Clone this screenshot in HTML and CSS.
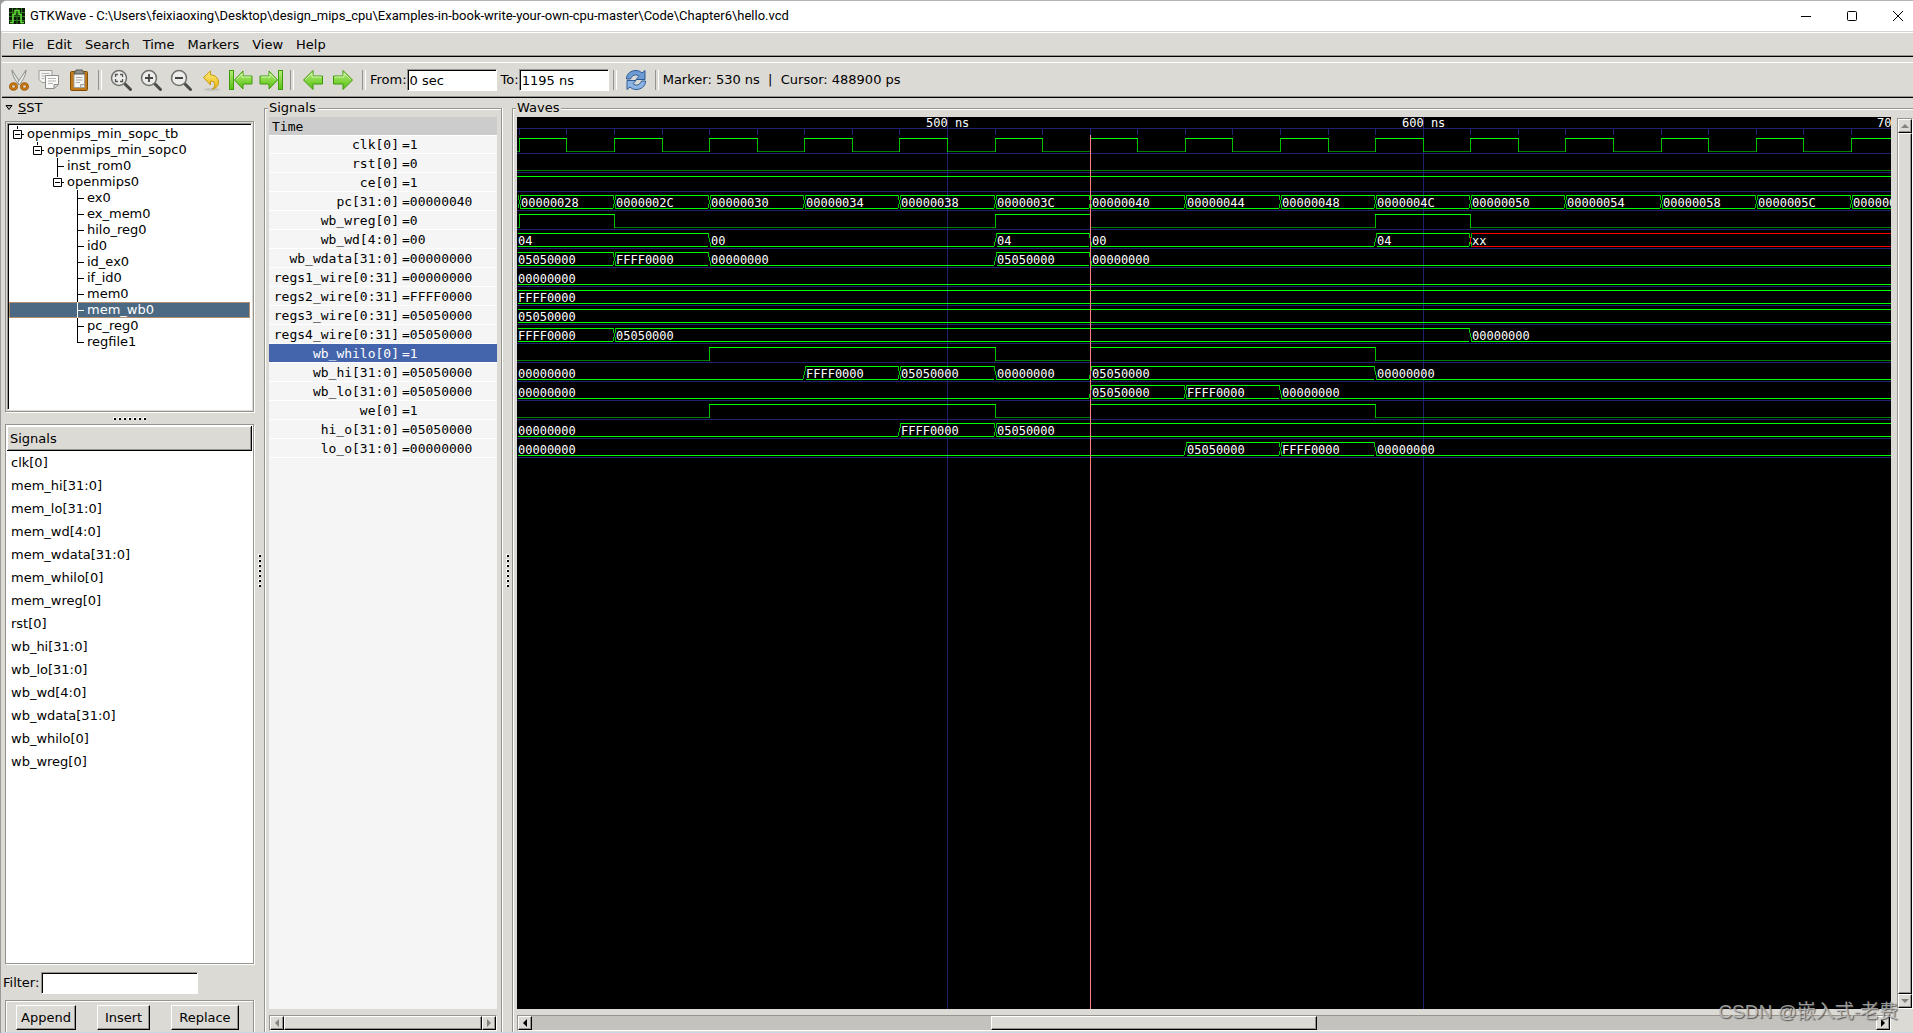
FILE: index.html
```html
<!DOCTYPE html>
<html lang="en">
<head>
<meta charset="utf-8">
<title>GTKWave - hello.vcd</title>
<link rel="stylesheet" href="styles.css">
</head>
<body>
<svg class="defs" aria-hidden="true">
  <defs>
    <linearGradient id="green" x1="0" y1="0" x2="0" y2="1"><stop offset="0" stop-color="#b4ee78"/><stop offset="1" stop-color="#58c010"/></linearGradient>
    <linearGradient id="gold" x1="0" y1="0" x2="0" y2="1"><stop offset="0" stop-color="#fdf07a"/><stop offset="1" stop-color="#e8b010"/></linearGradient>
    <symbol id="expander" viewBox="0 0 18 16"><path d="M8.500 0V3M4.500 4.500h8v8h-8zM6 8.500h5M13 8.500h2" fill="none" stroke="currentColor"/></symbol>
    <symbol id="tee" viewBox="0 0 18 16"><path d="M8.500 0V16M9 8.500h6" fill="none" stroke="currentColor"/></symbol>
    <symbol id="elbow" viewBox="0 0 18 16"><path d="M8.500 0V9M9 8.500h6" fill="none" stroke="currentColor"/></symbol>
    <symbol id="lens" viewBox="0 0 24 24"><path d="M15 15l6.500 6.500" stroke="#4a4c48" stroke-width="3" stroke-linecap="round"/><circle cx="10" cy="10" r="7.500" fill="#ececea" stroke="#70726e" stroke-width="1.500"/></symbol>
    <symbol id="arrow-left" viewBox="0 0 24 24"><path d="M2.500 12L12 2.500V8h9.500v8H12v5.500z" fill="url(#green)" stroke="#3f9a0a" stroke-linejoin="round"/><path d="M4.500 11.500L11 5v4h9.500" fill="none" stroke="#d6f8b4"/></symbol>
    <symbol id="arrow-right" viewBox="0 0 24 24"><path d="M21.500 12L12 2.500V8H2.500v8H12v5.500z" fill="url(#green)" stroke="#3f9a0a" stroke-linejoin="round"/><path d="M3.500 9H13V5l6.500 6.500" fill="none" stroke="#d6f8b4"/></symbol>
  </defs>
</svg>

<div class="window">
  <header class="titlebar">
    <svg class="app-icon" viewBox="0 0 16 16" aria-hidden="true"><rect width="16" height="16" fill="#0a1a04"/><path d="M0 4.500h16M0 8.500h16M0 12.500h16M3.500 0v16M8 0v16M12.500 0v16" stroke="#2c7a1c"/><path d="M1 14.500h3V6.500h2v-4h4v4h2v8h3" fill="none" stroke="#66e03c" stroke-width="1.500"/></svg>
    <h1 class="title">GTKWave - C:\Users\feixiaoxing\Desktop\design_mips_cpu\Examples-in-book-write-your-own-cpu-master\Code\Chapter6\hello.vcd</h1>
    <div class="window-buttons">
      <button type="button" aria-label="Minimize"><svg viewBox="0 0 12 12"><path d="M1 6.500h10"/></svg></button>
      <button type="button" aria-label="Maximize"><svg viewBox="0 0 12 12"><rect x="1.500" y="1.500" width="9" height="9" rx="1"/></svg></button>
      <button type="button" aria-label="Close"><svg viewBox="0 0 12 12"><path d="M1 1l10 10M11 1L1 11"/></svg></button>
    </div>
  </header>

  <nav class="menubar">
    <button type="button">File</button>
    <button type="button">Edit</button>
    <button type="button">Search</button>
    <button type="button">Time</button>
    <button type="button">Markers</button>
    <button type="button">View</button>
    <button type="button">Help</button>
  </nav>

  <div class="toolbar">
    <button type="button" class="tool" aria-label="Cut"><svg viewBox="0 0 24 24"><path d="M5 2l8.500 13-2 1.500C8.500 12.500 5 7 5 2z" fill="#e4e6e2" stroke="#888a85"/><path d="M19 2l-8.500 13 2 1.500C15.500 12.500 19 7 19 2z" fill="#f4f4f2" stroke="#888a85"/><g fill="none" stroke="#a85c04" stroke-width="3"><ellipse cx="6.500" cy="18.500" rx="3" ry="2.700"/><ellipse cx="17.500" cy="18.500" rx="3" ry="2.700"/></g><g fill="none" stroke="#d88818"><ellipse cx="6.500" cy="18.500" rx="3" ry="2.700"/><ellipse cx="17.500" cy="18.500" rx="3" ry="2.700"/></g></svg></button>
    <button type="button" class="tool" aria-label="Copy"><svg viewBox="0 0 24 24"><path d="M2 2.500h13v12H5l-3-3z" fill="#f4f4f2" stroke="#9a9c98"/><path d="M4.500 5.500h8M4.500 8h8M4.500 10.500h3" stroke="#b4b6b2"/><path d="M8.500 7.500h13v9l-4 4h-9z" fill="#fafaf8" stroke="#8c8e8a"/><path d="M11 10.500h8M11 13h8M11 15.500h5" stroke="#b4b6b2"/><path d="M21 16.500h-4v4" fill="#d4d4d0" stroke="#8c8e8a"/></svg></button>
    <button type="button" class="tool" aria-label="Paste"><svg viewBox="0 0 24 24"><rect x="3.500" y="3.500" width="17" height="19" rx="1" fill="#c07818" stroke="#805008"/><path d="M7 5.500h10.500v14H7z" fill="#f6f6f4" stroke="#a0a09c"/><path d="M9 2h6.500l2 4H7z" fill="#8c8e8a" stroke="#555753"/><path d="M9 9.500h6.500M9 12h6.500M9 14.500h4" stroke="#a8aaa6"/><path d="M13.500 19.500v-3h4" fill="#d4d4d0" stroke="#a0a09c"/></svg></button>
    <span class="separator"></span>
    <button type="button" class="tool" aria-label="Zoom fit"><svg viewBox="0 0 24 24"><use href="#lens"/><path d="M6.500 9V6.500H9M11 6.500h2.500V9M13.500 11v2.500H11M9 13.500H6.500V11" fill="none" stroke="#555753" stroke-width="1.300"/></svg></button>
    <button type="button" class="tool" aria-label="Zoom in"><svg viewBox="0 0 24 24"><use href="#lens"/><path d="M6 10h8M10 6v8" stroke="#444642" stroke-width="1.800"/></svg></button>
    <button type="button" class="tool" aria-label="Zoom out"><svg viewBox="0 0 24 24"><use href="#lens"/><path d="M6 10h8" stroke="#444642" stroke-width="1.800"/></svg></button>
    <button type="button" class="tool" aria-label="Undo zoom"><svg viewBox="0 0 24 24"><ellipse cx="13" cy="21.500" rx="8" ry="1.500" fill="#c2c1bb"/><path d="M4.500 9.500L11.500 3v4c5.500 0 8 3.500 8 7.500 0 3-2 5.500-6 6.500 2-2 2.500-3.500 2-5.500-.5-2-2-2.500-4-2.500v4z" fill="url(#gold)" stroke="#c89808" stroke-linejoin="round"/></svg></button>
    <button type="button" class="tool" aria-label="Zoom to start"><svg viewBox="0 0 24 24"><rect x=".5" y="2.500" width="4" height="19" fill="url(#green)" stroke="#3f9a0a"/><path d="M5.500 12L14 3v5h9v8h-9v5z" fill="url(#green)" stroke="#3f9a0a" stroke-linejoin="round"/><path d="M7.500 11.500L13 5.500V9h9" fill="none" stroke="#d6f8b4"/></svg></button>
    <button type="button" class="tool" aria-label="Zoom to end"><svg viewBox="0 0 24 24"><rect x="19.500" y="2.500" width="4" height="19" fill="url(#green)" stroke="#3f9a0a"/><path d="M18.500 12L10 3v5H1v8h9v5z" fill="url(#green)" stroke="#3f9a0a" stroke-linejoin="round"/><path d="M2 9h9V5.500l5.500 6" fill="none" stroke="#d6f8b4"/></svg></button>
    <span class="separator"></span>
    <button type="button" class="tool" aria-label="Previous edge"><svg viewBox="0 0 24 24"><use href="#arrow-left"/></svg></button>
    <button type="button" class="tool" aria-label="Next edge"><svg viewBox="0 0 24 24"><use href="#arrow-right"/></svg></button>
    <span class="separator"></span>
    <label for="from">From:</label><input class="time-input" id="from" type="text" value="0 sec">
    <label for="to" class="to-label">To:</label><input class="time-input" id="to" type="text" value="1195 ns">
    <span class="separator"></span>
    <button type="button" class="tool" aria-label="Reload"><svg viewBox="0 0 24 24"><path d="M2.500 11C2.500 5.500 7 2.500 12 2.500c2.500 0 4.500 1 6 2.500l3-2.500v9h-9l3-3.200C12.500 6 8 6.500 6.500 11z" fill="#6e9cd2" stroke="#2c5a94" stroke-linejoin="round"/><path d="M21.500 13c0 5.500-4.500 8.500-9.500 8.500-2.500 0-4.500-1-6-2.500l-3 2.500v-9h9l-3 3.200c2.500 2.300 7 1.800 8.500-2.700z" fill="#8cb4e2" stroke="#2c5a94" stroke-linejoin="round"/></svg></button>
    <span class="separator"></span>
    <span class="status">Marker: 530 ns&nbsp; |&nbsp; Cursor: 488900 ps</span>
  </div>

  <main class="panes">
    <section class="browser">
      <button type="button" class="sst-toggle"><svg viewBox="0 0 8 6" aria-hidden="true"><path d="M1 .5h6L4 4.500z" fill="#aaa" stroke="#000"/></svg><span><u>S</u>ST</span></button>
      <div class="tree-frame">
        <ul class="tree">
          <li><svg><use href="#expander"/></svg>openmips_min_sopc_tb</li>
          <li class="level-1"><svg><use href="#expander"/></svg>openmips_min_sopc0</li>
          <li class="level-2"><svg><use href="#tee"/></svg>inst_rom0</li>
          <li class="level-2"><svg><use href="#expander"/></svg>openmips0</li>
          <li class="level-3"><svg><use href="#tee"/></svg>ex0</li>
          <li class="level-3"><svg><use href="#tee"/></svg>ex_mem0</li>
          <li class="level-3"><svg><use href="#tee"/></svg>hilo_reg0</li>
          <li class="level-3"><svg><use href="#tee"/></svg>id0</li>
          <li class="level-3"><svg><use href="#tee"/></svg>id_ex0</li>
          <li class="level-3"><svg><use href="#tee"/></svg>if_id0</li>
          <li class="level-3"><svg><use href="#tee"/></svg>mem0</li>
          <li class="level-3 selected"><svg><use href="#tee"/></svg>mem_wb0</li>
          <li class="level-3"><svg><use href="#tee"/></svg>pc_reg0</li>
          <li class="level-3"><svg><use href="#elbow"/></svg>regfile1</li>
        </ul>
      </div>
      <div class="grip grip-row"><i></i><i></i><i></i><i></i><i></i><i></i><i></i></div>
      <div class="signal-list">
        <h2>Signals</h2>
        <ul>
          <li>clk[0]</li>
          <li>mem_hi[31:0]</li>
          <li>mem_lo[31:0]</li>
          <li>mem_wd[4:0]</li>
          <li>mem_wdata[31:0]</li>
          <li>mem_whilo[0]</li>
          <li>mem_wreg[0]</li>
          <li>rst[0]</li>
          <li>wb_hi[31:0]</li>
          <li>wb_lo[31:0]</li>
          <li>wb_wd[4:0]</li>
          <li>wb_wdata[31:0]</li>
          <li>wb_whilo[0]</li>
          <li>wb_wreg[0]</li>
        </ul>
      </div>
      <div class="filter"><label for="filter">Filter:</label><input id="filter" type="text"></div>
      <div class="actions">
        <button type="button">Append</button>
        <button type="button">Insert</button>
        <button type="button">Replace</button>
      </div>
    </section>

    <div class="grip grip-column"><i></i><i></i><i></i><i></i><i></i><i></i><i></i></div>

    <section class="panel values-panel">
      <h2>Signals</h2>
      <div class="values">
        <table>
          <thead><tr><th colspan="2">Time</th></tr></thead>
          <tbody>
            <tr><td>clk[0]</td><td>=1</td></tr>
            <tr><td>rst[0]</td><td>=0</td></tr>
            <tr><td>ce[0]</td><td>=1</td></tr>
            <tr><td>pc[31:0]</td><td>=00000040</td></tr>
            <tr><td>wb_wreg[0]</td><td>=0</td></tr>
            <tr><td>wb_wd[4:0]</td><td>=00</td></tr>
            <tr><td>wb_wdata[31:0]</td><td>=00000000</td></tr>
            <tr><td>regs1_wire[0:31]</td><td>=00000000</td></tr>
            <tr><td>regs2_wire[0:31]</td><td>=FFFF0000</td></tr>
            <tr><td>regs3_wire[0:31]</td><td>=05050000</td></tr>
            <tr><td>regs4_wire[0:31]</td><td>=05050000</td></tr>
            <tr class="selected"><td>wb_whilo[0]</td><td>=1</td></tr>
            <tr><td>wb_hi[31:0]</td><td>=05050000</td></tr>
            <tr><td>wb_lo[31:0]</td><td>=05050000</td></tr>
            <tr><td>we[0]</td><td>=1</td></tr>
            <tr><td>hi_o[31:0]</td><td>=05050000</td></tr>
            <tr><td>lo_o[31:0]</td><td>=00000000</td></tr>
          </tbody>
        </table>
      </div>
      <div class="scrollbar disabled">
        <button type="button" aria-label="Scroll left"><svg viewBox="0 0 8 8"><path d="M6 0v8L2 4z"/></svg></button>
        <span class="thumb full"></span>
        <button type="button" aria-label="Scroll right"><svg viewBox="0 0 8 8"><path d="M2 0v8l4-4z"/></svg></button>
      </div>
    </section>

    <div class="grip grip-column"><i></i><i></i><i></i><i></i><i></i><i></i><i></i></div>

    <section class="panel waves-panel">
      <h2>Waves</h2>
      <div class="waves-body">
        <div class="waves-main">
          <svg class="waves" id="waves" role="img" aria-label="Waveforms"></svg>
          <div class="scrollbar">
            <button type="button" aria-label="Scroll left"><svg viewBox="0 0 8 8"><path d="M6 0v8L2 4z"/></svg></button>
            <span class="track"></span><span class="thumb"></span><span class="track after"></span>
            <button type="button" aria-label="Scroll right"><svg viewBox="0 0 8 8"><path d="M2 0v8l4-4z"/></svg></button>
          </div>
        </div>
        <div class="scrollbar vertical disabled">
          <button type="button" aria-label="Scroll up"><svg viewBox="0 0 8 8"><path d="M0 6h8L4 2z"/></svg></button>
          <span class="thumb full"></span>
          <button type="button" aria-label="Scroll down"><svg viewBox="0 0 8 8"><path d="M0 2h8L4 6z"/></svg></button>
        </div>
      </div>
    </section>
  </main>
  <div class="watermark">CSDN @嵌入式-老费</div>
</div>
<script src="waves.js"></script>
</body>
</html>
```
FILE: styles.css
```css
* { box-sizing: border-box; }

body {
  margin: 0;
  background: #9a9a98;
  color: #000;
  font: 13px/16px "DejaVu Sans", sans-serif;
}

h1, h2, ul { margin: 0; padding: 0; font-size: inherit; font-weight: normal; }
ul { list-style: none; }
button, input { font: inherit; color: inherit; margin: 0; border-radius: 0; }
button { padding: 0; border: 0; background: none; }
svg { display: block; }

.defs { position: absolute; width: 0; height: 0; }

.window {
  position: relative;
  display: flex;
  flex-direction: column;
  min-height: 100vh;
  margin-left: 1px;
  padding-left: 1px;
  border-top: 1px solid #b4b4b4;
  border-bottom: 1px solid #ccd6e6;
  border-top-left-radius: 6px;
  background: #dcdad5;
  overflow: hidden;
}

.titlebar {
  display: flex;
  align-items: center;
  height: 31px;
  margin-left: -1px;
  padding-left: 8px;
  border-bottom: 1px solid #d4d4d0;
  background: #fff;
}
.app-icon { width: 16px; height: 16px; }
.title { flex: 1; margin-left: 5px; font: 13px/20px Roboto, sans-serif; white-space: nowrap; }
.window-buttons { display: flex; gap: 16px; }
.window-buttons button { display: grid; place-items: center; width: 30px; height: 28px; }
.window-buttons svg { width: 12px; height: 12px; fill: none; stroke: #000; }

.menubar {
  display: flex;
  gap: 13px;
  height: 25px;
  padding-left: 10px;
  border-top: 1px solid #fff;
  border-bottom: 1px solid #000;
  box-shadow: inset 0 -1px #96948f;
}

.toolbar {
  display: flex;
  align-items: center;
  height: 36px;
  margin-top: 5px;
  padding-left: 2px;
  border-top: 1px solid #fff;
  border-bottom: 1px solid #000;
  box-shadow: inset 0 -1px #96948f;
}
.tool { display: grid; place-items: center; width: 30px; height: 30px; }
.tool svg { width: 24px; height: 24px; }
.separator { display: flex; justify-content: center; width: 12px; height: 20px; }
.separator::before { content: ""; width: 2px; border-left: 1px solid #96948f; border-right: 1px solid #fff; }
.to-label { margin-left: 4px; }

input {
  height: 22px;
  padding: 0 2px;
  border: 1px solid;
  border-color: #96948f #fff #fff #96948f;
  background: #fff;
  box-shadow: inset 1px 1px #000;
}
.time-input { width: 90px; }

.panes { flex: 1; display: flex; }

.browser { display: flex; flex-direction: column; width: 252px; padding-top: 2px; }
.browser > * { margin-left: 3px; }
.sst-toggle { display: flex; align-items: center; gap: 5px; height: 16px; }
.sst-toggle svg { width: 8px; height: 6px; }

.tree-frame {
  height: 291px;
  margin-top: 5px;
  border: 1px solid #96948f;
  background: #dcdad5;
  box-shadow: 1px 1px #fff;
  padding: 1px;
}
.tree {
  height: 100%;
  padding-top: 2px;
  border: 1px solid;
  border-color: #96948f #fff #fff #96948f;
  background: #fff;
  box-shadow: inset 1px 1px #000;
}
.tree li { display: flex; height: 16px; margin: 0 1px; line-height: 16px; }
.tree svg { flex: none; width: 18px; height: 16px; }
.tree .level-1 { padding-left: 20px; }
.tree .level-2 { padding-left: 40px; }
.tree .level-3 { padding-left: 60px; }
.tree .selected { background: #4b6983; color: #fff; box-shadow: inset 0 0 0 1px #b08f70; }

.grip { display: flex; align-items: center; justify-content: center; gap: 2px; }
.grip i { width: 3px; height: 3px; background: linear-gradient(#000, #000) 1px 1px / 2px 2px no-repeat #fff; }
.grip-row { height: 12px; }
.grip-column { flex-direction: column; width: 10px; padding-top: 10px; }

.signal-list {
  flex: 1;
  padding: 1px;
  border: 1px solid #96948f;
  background: #fff;
  box-shadow: 1px 1px #fff;
}
.signal-list h2 {
  height: 25px;
  padding-left: 3px;
  border-right: 1px solid #000;
  border-bottom: 1px solid #000;
  background: #dcdad5;
  box-shadow: inset 1px 1px #fff, inset -1px -1px #96948f;
  line-height: 25px;
}
.signal-list li { height: 23px; padding-left: 4px; line-height: 23px; }

.browser .filter { display: flex; align-items: center; gap: 2px; height: 36px; margin-left: 1px; padding-top: 1px; }
.filter input { width: 157px; height: 22px; }

.actions {
  display: flex;
  gap: 21px;
  height: 32px;
  padding: 4px 0 0 10px;
  border: 1px solid #96948f;
  border-bottom: 0;
  box-shadow: inset 1px 1px #fff, 1px 0 #fff;
}
.actions button {
  height: 25px;
  padding: 0 4px;
  border: 1px solid;
  border-color: #fff #000 #000 #fff;
  box-shadow: inset -1px -1px #96948f;
}
.actions button:nth-child(n + 2) { padding: 0 7px; }

.panel {
  display: flex;
  flex-direction: column;
  margin-top: 10px;
  padding: 0 4px;
  border: 1px solid #96948f;
  border-bottom: 0;
  box-shadow: inset 1px 1px #fff;
}
.panel h2 { align-self: flex-start; height: 17px; margin: -9px 0 0 -1px; padding: 0 2px 0 1px; background: #dcdad5; line-height: 16px; }
.values-panel { width: 238px; box-shadow: inset 1px 1px #fff, 1px 0 #fff; }
.values { flex: 1; background: #f5f5f5; }

.values table { width: 100%; border-spacing: 0; font: 13px/16px "DejaVu Sans Mono", monospace; }
.values th { height: 19px; padding: 2px 3px 0; background: #ccc; border-bottom: 1px solid #fff; font-weight: normal; text-align: left; }
.values td { height: 19px; padding: 2px 0 0; border-bottom: 1px solid #fff; }
.values td:first-child { width: 130px; text-align: right; }
.values td:last-child { padding-left: 3px; }
.values tbody tr:first-child td { height: 18px; padding-top: 1px; }
.values .selected { background: #4464ac; color: #fff; }

.scrollbar {
  display: flex;
  height: 16px;
  margin: 6px 0 1px;
  border: 1px solid;
  border-color: #96948f #fff #fff #96948f;
  background: #c4c2bd;
}
.scrollbar button, .thumb {
  border: 1px solid;
  border-color: #fff #000 #000 #fff;
  background: #dcdad5;
  box-shadow: inset -1px -1px #96948f;
}
.scrollbar button { display: grid; place-items: center; flex: none; width: 14px; }
.scrollbar svg { width: 8px; height: 8px; fill: #000; }
.disabled svg { fill: #84827e; }
.track { flex: 460; }
.thumb { flex: 325; }
.after { flex: 560; }

.waves-panel { flex: 1; min-width: 0; padding-right: 0; border-right: 0; }
.waves-body { flex: 1; display: flex; gap: 6px; }
.waves-main { flex: 1; min-width: 0; display: flex; flex-direction: column; }
.waves { flex: 1; width: 100%; min-height: 360px; background: #000; }
.vertical { flex-direction: column; width: 16px; height: auto; margin: 1px 0 23px; }
.vertical button { width: auto; height: 14px; }

.waves text { fill: #fff; font: 12px "DejaVu Sans Mono", monospace; white-space: pre; }
.waves path { fill: none; shape-rendering: crispEdges; }
.grid { stroke: #202070; }
.high { stroke: #00ff00; }
.low { stroke: #008000; }
.edge { stroke: #00c000; }
.undefined { stroke: #ff0000; }
.marker { stroke: #ff8080; }

.watermark {
  position: absolute;
  right: 15px;
  bottom: 8px;
  color: rgba(200, 200, 200, 0.75);
  font: 19px/24px "Liberation Sans", "Noto Sans CJK SC", sans-serif;
  text-shadow: 1px 1px 1px rgba(60, 60, 60, 0.8);
  pointer-events: none;
}
```
FILE: waves.js
```js
// Times are in ns. A trace is a list of [start time, value] changes.
const START = 408;
const SCALE = 4.757;
const ROW = 19;
const FAR = 5000;
const END = START + FAR / SCALE;

const clock = [[START, 0]];
for (let t = 410; t < END; t += 20) clock.push([t, 1], [t + 10, 0]);

const counter = [[START, '']];
for (let t = 410, v = 0x28; t < 1195; t += 20, v += 4) {
  counter.push([t, v.toString(16).toUpperCase().padStart(8, '0')]);
}

const Z = '00000000', F = 'FFFF0000', V = '05050000';
const enable = [[START, 0], [450, 1], [510, 0], [530, 1], [590, 0]];
const rows = [
  clock,
  [[START, 0]],
  [[START, 1]],
  counter,
  [[START, 0], [410, 1], [430, 0], [510, 1], [530, 0], [590, 1], [610, 0]],
  [[START, '04'], [450, '00'], [510, '04'], [530, '00'], [590, '04'], [610, 'xx']],
  [[START, V], [430, F], [450, Z], [510, V], [530, Z]],
  [[START, Z]],
  [[START, F]],
  [[START, V]],
  [[START, F], [430, V], [610, Z]],
  enable,
  [[START, Z], [470, F], [490, V], [510, Z], [530, V], [590, Z]],
  [[START, Z], [530, V], [550, F], [570, Z]],
  enable,
  [[START, Z], [490, F], [510, V]],
  [[START, Z], [550, V], [570, F], [590, Z]],
];

const svg = document.getElementById('waves');
const NS = 'http://www.w3.org/2000/svg';
const width = svg.clientWidth;
const xAt = t => (t <= START ? 0 : Math.round(430 + (t - 500) * SCALE));

function path(cls, d) {
  const el = document.createElementNS(NS, 'path');
  el.setAttribute('class', cls);
  el.setAttribute('d', d);
  svg.append(el);
}
function label(x, y, value) {
  if (!value || x > width) return;
  const el = document.createElementNS(NS, 'text');
  el.setAttribute('x', x);
  el.setAttribute('y', y);
  el.textContent = value;
  svg.append(el);
}
const isZero = v => /^0+$/.test(v);

let grid = `M0 11.5H${FAR}`;
for (let t = 410; t < END; t += 10) grid += `M${xAt(t) + 0.5} 12v6`;
for (let t = 500; t < END; t += 100) grid += `M${xAt(t) + 0.5} 0V${FAR}`;
rows.forEach((_, i) => { grid += `M0 ${36.5 + i * ROW}H${FAR}`; });
path('grid', grid);
for (let t = 500; t < END; t += 100) label(xAt(t) - 21, 10, `${t} ns`);

let high = '', low = '', edge = '', undef = '';
rows.forEach((trace, i) => {
  const top = 21.5 + i * ROW;
  const bottom = top + 13;
  trace.forEach(([t, value], k) => {
    const x = xAt(t);
    const next = k + 1 < trace.length ? xAt(trace[k + 1][0]) : FAR;
    if (typeof value === 'number') {
      if (value) high += `M${x} ${top}H${next + 1}`;
      else low += `M${x} ${bottom}H${next + 1}`;
      if (k) edge += `M${x + 0.5} ${top}V${bottom}`;
      return;
    }
    const from = k ? x + 2 : 1;
    let body = `M${from} ${bottom}H${next - 1}`;
    if (!isZero(value)) body += `M${from} ${top}H${next - 1}`;
    if (value === 'xx') undef += body + `M${x + 0.5} ${top + 3}v7`;
    else high += body;
    if (k) {
      if (!isZero(trace[k - 1][1])) edge += `M${x - 1} ${top}L${x + 2} ${bottom}`;
      if (!isZero(value)) edge += `M${x - 1} ${bottom}L${x + 2} ${top}`;
    }
    label(k ? x + 2 : 1, bottom - 1.5, value);
  });
});
path('low', low);
path('edge', edge);
path('high', high);
path('undefined', undef);
path('marker', `M${xAt(530) + 0.5} 18V${FAR}`);
```
